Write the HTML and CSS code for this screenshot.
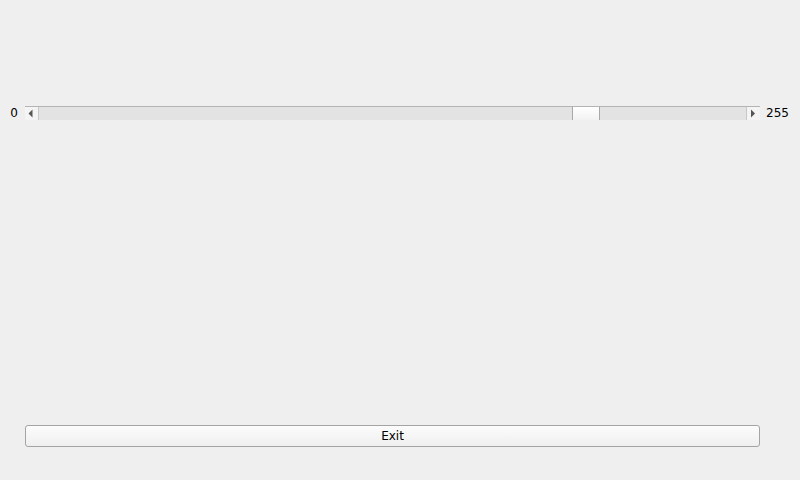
FILE: index.html
```html
<!DOCTYPE html>
<html>
<head>
<meta charset="utf-8">
<link rel="stylesheet" href="styles.css">
</head>
<body>
<div class="window">
  <div class="slider-row">
    <span class="label-min">0</span>
    <div class="scrollbar">
      <div class="arrow-btn">
        <svg width="13" height="13" viewBox="0 0 13 13"><path d="M3.5 6.5 L7.5 2.5 L7.5 10.5 Z" fill="#555"/></svg>
      </div>
      <div class="groove">
        <div class="groove-fill before"></div>
        <div class="handle"></div>
        <div class="groove-fill after"></div>
      </div>
      <div class="arrow-btn right">
        <svg width="13" height="13" viewBox="0 0 13 13"><path d="M8 6.5 L4 2.5 L4 10.5 Z" fill="#555"/></svg>
      </div>
    </div>
    <span class="label-max">255</span>
  </div>
  <div class="spacer"></div>
  <div class="button-row">
    <button class="exit-btn">Exit</button>
  </div>
</div>
</body>
</html>
```
FILE: styles.css
```css
html, body {
  margin: 0;
  padding: 0;
  background: #efefef;
  font-family: "DejaVu Sans", sans-serif;
  font-size: 12px;
  color: #000;
}
.window {
  width: 800px;
  height: 480px;
  display: flex;
  flex-direction: column;
}
.slider-row {
  margin-top: 106px;
  height: 14px;
  display: flex;
  align-items: center;
}
.label-min {
  width: 25px;
  box-sizing: border-box;
  padding-right: 7px;
  text-align: right;
  line-height: 14px;
}
.label-max {
  margin-left: 6px;
  line-height: 14px;
}
.scrollbar {
  width: 735px;
  height: 14px;
  display: flex;
  box-sizing: border-box;
  border-top: 1px solid #b4b4b4;
}
.arrow-btn {
  width: 13px;
  height: 13px;
  background: #f4f4f4;
  border-right: 1px solid #c8c8c8;
  display: flex;
}
.arrow-btn.right {
  border-right: none;
  border-left: 1px solid #c8c8c8;
}
.groove {
  flex: 1;
  display: flex;
  height: 13px;
}
.groove-fill {
  background: #e3e3e3;
}
.groove-fill.before {
  width: 533px;
}
.groove-fill.after {
  flex: 1;
}
.handle {
  width: 26px;
  background: linear-gradient(#ffffff, #f2f2f2);
  border-left: 1px solid #a8a8a8;
  border-right: 1px solid #a8a8a8;
}
.spacer {
  flex: 1;
}
.button-row {
  padding: 0 40px 33px 25px;
}
.exit-btn {
  width: 735px;
  height: 22px;
  margin: 0;
  padding: 0;
  border: 1px solid #a4a4a4;
  border-radius: 3px;
  background: linear-gradient(#fcfcfc, #efefef);
  font-family: "DejaVu Sans", sans-serif;
  font-size: 12px;
  color: #000;
  display: block;
}
```
